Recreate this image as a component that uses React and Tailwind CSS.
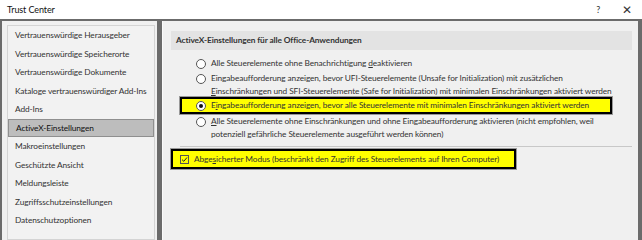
import React from 'react';

const NAV = [
  'Vertrauenswürdige Herausgeber',
  'Vertrauenswürdige Speicherorte',
  'Vertrauenswürdige Dokumente',
  'Kataloge vertrauenswürdiger Add-Ins',
  'Add-Ins',
  'ActiveX-Einstellungen',
  'Makroeinstellungen',
  'Geschützte Ansicht',
  'Meldungsleiste',
  'Zugriffsschutzeinstellungen',
  'Datenschutzoptionen',
];

const Radio = ({ checked }) => (
  <span className="mt-[1.5px] flex h-[10px] w-[10px] shrink-0 items-center justify-center rounded-full border border-[#555] bg-white">
    {checked && <span className="h-[4px] w-[4px] rounded-full bg-[#111]" />}
  </span>
);

const Option = ({ checked, children }) => (
  <div className="flex items-start gap-[5px]">
    <Radio checked={checked} />
    <span className="whitespace-nowrap leading-[13px]">{children}</span>
  </div>
);

export default function App() {
  return (
    <div
      className="flex h-[240px] w-[642px] flex-col overflow-hidden bg-[#6b6b6b] text-[8.3px] tracking-[-0.1px] text-[#222]"
      style={{ fontFamily: 'Lato, "Noto Sans", sans-serif' }}
    >
      {/* title bar */}
      <div className="flex h-[19px] shrink-0 items-center justify-between bg-white pl-[7px] pr-[10px] text-[#111]">
        <span className="text-[9px]">Trust Center</span>
        <div className="flex items-center gap-[22px] text-[9px] text-[#333]">
          <span>?</span>
          <span className="text-[12px] font-light">✕</span>
        </div>
      </div>

      <div className="flex flex-1 gap-[5px] pt-[2px] pl-[2px] pr-[4px]">
        {/* left nav */}
        <div className="w-[155px] shrink-0 bg-[#f0f0f0] pl-[5px] pr-[2px] pt-[4px]">
          <div className="h-full border border-[#d4d4d4] bg-[#f2f2f2]">
            {NAV.map((item) => (
              <div
                key={item}
                className={`flex h-[18.5px] items-center whitespace-nowrap pl-[7px] ${
                  item === 'ActiveX-Einstellungen'
                    ? 'border border-[#8f8f8f] bg-[#bdbdbd] text-[#111]'
                    : 'text-[#333]'
                }`}
              >
                {item}
              </div>
            ))}
          </div>
        </div>

        {/* right content */}
        <div className="flex-1 border-l border-[#fafafa] bg-[#f0f0f0] pl-[8px] pr-[6px] pt-[10px]">
          <div className="flex h-[19px] items-center bg-[#e3e3e3] pl-[5px] font-bold text-[#333]">
            ActiveX-Einstellungen für alle Office-Anwendungen
          </div>

          <div className="mt-[7px] flex flex-col pl-[25px] text-[#333]">
            <Option>
              Alle Steuerelemente ohne Benachrichtigung <u>d</u>eaktivieren
            </Option>
            <div className="mt-[2px]">
              <Option>
                Eingabeaufforderung anzeigen, bevor UFI-Steuerelemente (Unsafe for Initialization) mit zusätzlichen
                <br />
                <u>E</u>inschränkungen und SFI-Steuerelemente (Safe for Initialization) mit minimalen Einschränkungen aktiviert werden
              </Option>
            </div>
            <div className="-ml-[16px] -mt-[1px] w-[432px] border-2 border-black bg-[#ffff00] pl-[14px] shadow-[0_0_0_1px_#999]">
              <Option checked>
                E<u>i</u>ngabeaufforderung anzeigen, bevor alle Steuerelemente mit minimalen Einschränkungen aktiviert werden
              </Option>
            </div>
            <div className="mt-[1px]">
              <Option>
                <u>A</u>lle Steuerelemente ohne Einschränkungen und ohne Eingabeaufforderung aktivieren (nicht empfohlen, weil
                <br />
                potenziell gefährliche Steuerelemente ausgeführt werden können)
              </Option>
            </div>
          </div>

          <div className="ml-[9px] mt-[5px] border-t border-[#c8c8c8]" />

          <div className="mt-[2px] flex h-[20px] w-[345px] items-center gap-[5px] whitespace-nowrap border-2 border-black bg-[#ffff00] pl-[7px] text-[#333] shadow-[0_0_0_1px_#999]">
            <span className="flex h-[9px] w-[9px] shrink-0 items-center justify-center border border-[#555] bg-[#ffff00]">
              <svg width="7" height="7" viewBox="0 0 7 7">
                <path d="M1 3.6 L2.8 5.3 L6 1.5" fill="none" stroke="#222" strokeWidth="1" />
              </svg>
            </span>
            <span>
              Abge<u>s</u>icherter Modus (beschränkt den Zugriff des Steuerelements auf Ihren Computer)
            </span>
          </div>
        </div>
      </div>
    </div>
  );
}
